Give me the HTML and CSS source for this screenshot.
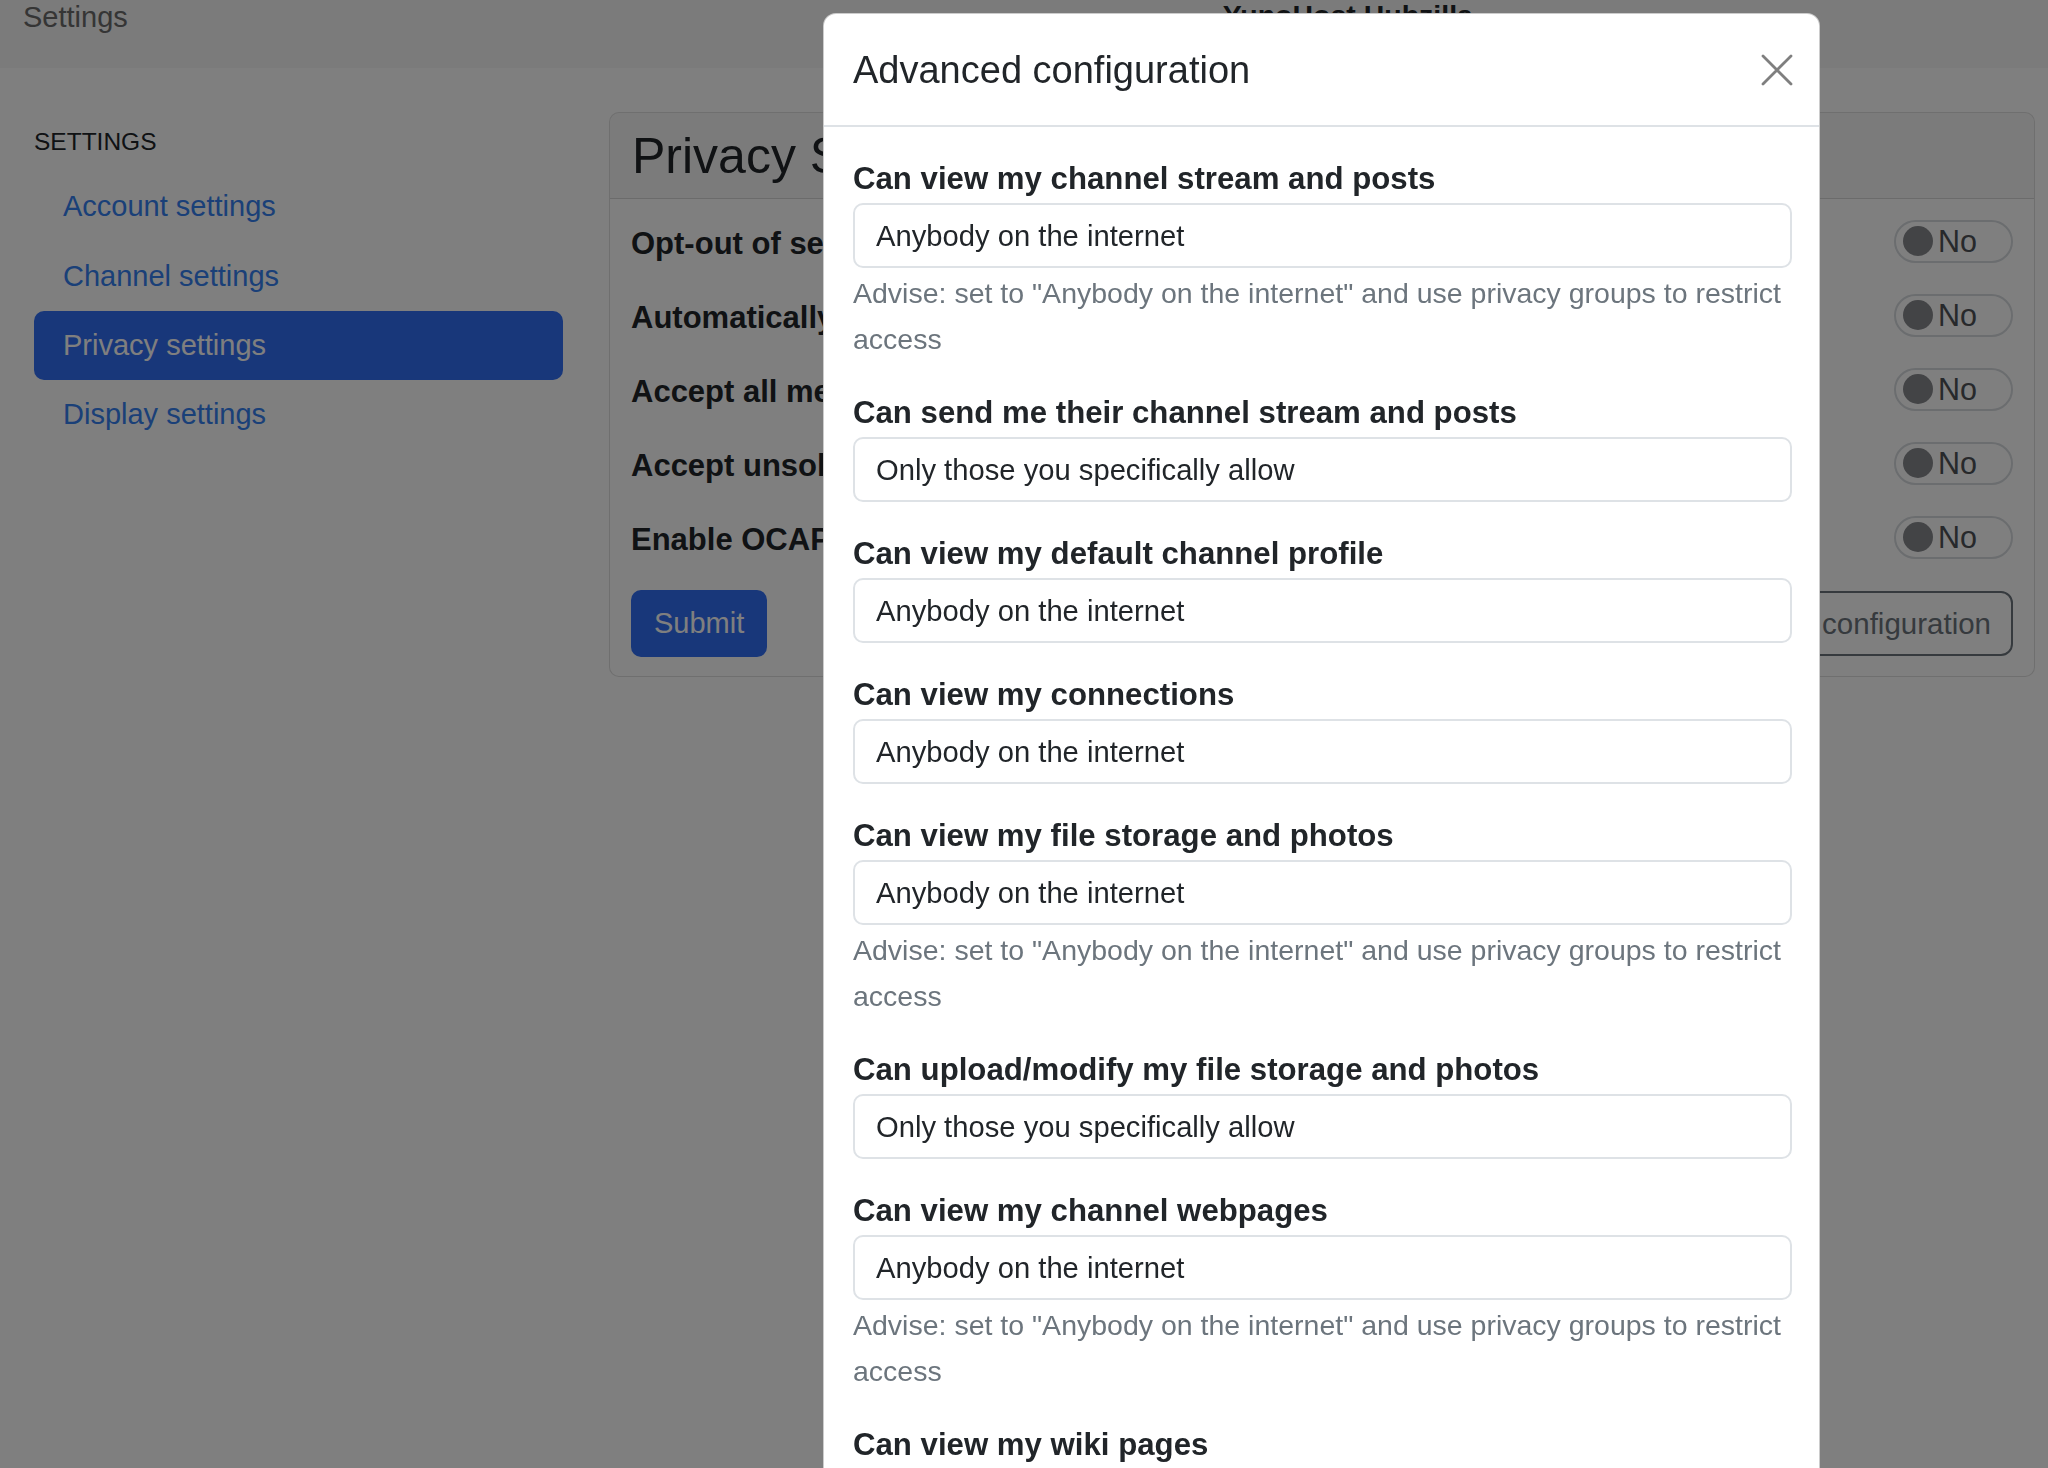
FILE: index.html
```html
<!DOCTYPE html>
<html lang="en">
<head>
<meta charset="utf-8">
<title>Privacy Settings</title>
<link rel="stylesheet" href="styles.css">
</head>
<body>
<div class="page">
  <header class="navbar">
    <span class="nav-left">Settings</span>
    <span class="brand">YunoHost Hubzilla</span>
  </header>
  <div class="main">
    <aside class="sidebar">
      <div class="side-title">Settings</div>
      <ul class="side-nav">
        <li><a class="side-link">Account settings</a></li>
        <li><a class="side-link">Channel settings</a></li>
        <li><a class="side-link active">Privacy settings</a></li>
        <li><a class="side-link">Display settings</a></li>
      </ul>
    </aside>
    <section class="card">
      <div class="card-header"><h2 class="card-title">Privacy Settings</h2></div>
      <div class="card-body">
        <div class="set-row"><span class="row-label">Opt-out of search engine indexing</span><span class="toggle"><span class="knob"></span><span class="toggle-text">No</span></span></div>
        <div class="set-row"><span class="row-label">Automatically approve new contacts</span><span class="toggle"><span class="knob"></span><span class="toggle-text">No</span></span></div>
        <div class="set-row"><span class="row-label">Accept all messages which mention you</span><span class="toggle"><span class="knob"></span><span class="toggle-text">No</span></span></div>
        <div class="set-row"><span class="row-label">Accept unsolicited comments</span><span class="toggle"><span class="knob"></span><span class="toggle-text">No</span></span></div>
        <div class="set-row"><span class="row-label">Enable OCAP access</span><span class="toggle"><span class="knob"></span><span class="toggle-text">No</span></span></div>
        <div class="actions">
          <button class="btn-submit">Submit</button>
          <button class="btn-outline">Advanced configuration</button>
        </div>
      </div>
    </section>
  </div>
</div>
<div class="backdrop"></div>
<div class="modal">
  <div class="modal-header">
    <h5 class="modal-title">Advanced configuration</h5>
    <svg class="close" width="32" height="32" viewBox="0 0 32 32" aria-label="Close">
      <path d="M2 2 L30 30 M30 2 L2 30" stroke="#7f7f7f" stroke-width="2.8" stroke-linecap="round" fill="none"/>
    </svg>
  </div>
  <div class="modal-body">
    <div class="group">
      <label class="g-label">Can view my channel stream and posts</label>
      <div class="select">Anybody on the internet</div>
      <div class="help">Advise: set to "Anybody on the internet" and use privacy groups to restrict access</div>
    </div>
    <div class="group">
      <label class="g-label">Can send me their channel stream and posts</label>
      <div class="select">Only those you specifically allow</div>
    </div>
    <div class="group">
      <label class="g-label">Can view my default channel profile</label>
      <div class="select">Anybody on the internet</div>
    </div>
    <div class="group">
      <label class="g-label">Can view my connections</label>
      <div class="select">Anybody on the internet</div>
    </div>
    <div class="group">
      <label class="g-label">Can view my file storage and photos</label>
      <div class="select">Anybody on the internet</div>
      <div class="help">Advise: set to "Anybody on the internet" and use privacy groups to restrict access</div>
    </div>
    <div class="group">
      <label class="g-label">Can upload/modify my file storage and photos</label>
      <div class="select">Only those you specifically allow</div>
    </div>
    <div class="group">
      <label class="g-label">Can view my channel webpages</label>
      <div class="select">Anybody on the internet</div>
      <div class="help">Advise: set to "Anybody on the internet" and use privacy groups to restrict access</div>
    </div>
    <div class="group">
      <label class="g-label">Can view my wiki pages</label>
      <div class="select">Anybody on the internet</div>
      <div class="help">Advise: set to "Anybody on the internet" and use privacy groups to restrict access</div>
    </div>
    <div class="group">
      <label class="g-label">Can create/edit my channel webpages</label>
      <div class="select">Only those you specifically allow</div>
    </div>
  </div>
</div>
</body>
</html>
```

FILE: styles.css
```css
* { box-sizing: border-box; }

html, body {
  margin: 0;
  padding: 0;
  height: 1468px;
  overflow: hidden;
  background: #ffffff;
  font-family: "Liberation Sans", Arial, sans-serif;
  color: #212529;
}

.page {
  width: 2048px;
}

/* navbar */
.navbar {
  height: 68px;
  background: #f6f6f6;
  display: flex;
  align-items: flex-start;
}

.nav-left {
  margin-left: 23px;
  font-size: 29px;
  line-height: 34.8px;
  color: #6b6b6b;
}

.brand {
  margin-left: 1095px;
  margin-top: -2px;
  font-size: 28.5px;
  line-height: 34.2px;
  font-weight: bold;
  color: #212529;
}

/* main layout */
.main {
  display: flex;
  gap: 46px;
  padding: 44px 13px 0 34px;
}

.sidebar {
  flex: 0 0 529px;
}

.side-title {
  margin-top: 15px;
  font-size: 24.5px;
  line-height: 29.4px;
  text-transform: uppercase;
  color: #212529;
}

.side-nav {
  list-style: none;
  margin: 16px 0 0;
  padding: 0;
}

.side-link {
  display: block;
  height: 69.33px;
  line-height: 69.33px;
  padding-left: 29px;
  font-size: 29px;
  color: #3580f0;
  border-radius: 10px;
}

.side-link.active {
  background: #306ef4;
  color: #ffffff;
}

/* card */
.card {
  flex: 0 0 1426px;
  background: #ffffff;
  border: 1px solid rgba(0, 0, 0, 0.13);
  border-radius: 10px;
  overflow: hidden;
}

.card-header {
  height: 86px;
  background: rgba(0, 0, 0, 0.03);
  border-bottom: 1px solid rgba(0, 0, 0, 0.13);
  padding: 13px 22px 0;
}

.card-title {
  margin: 0;
  font-size: 50px;
  line-height: 60px;
  font-weight: 400;
  color: #212529;
}

.card-body {
  padding: 5px 21px 19px 21px;
}

.set-row {
  height: 74px;
  display: flex;
  align-items: center;
  justify-content: space-between;
}

.row-label {
  padding-top: 5px;
  font-size: 31px;
  line-height: 37px;
  font-weight: bold;
  color: #212529;
}

.toggle {
  width: 119px;
  height: 43px;
  border: 2px solid #d6dade;
  border-radius: 22px;
  display: flex;
  align-items: center;
  padding-left: 7px;
  gap: 5px;
}

.knob {
  width: 30px;
  height: 30px;
  border-radius: 50%;
  background: #86888c;
}

.toggle-text {
  font-size: 30.5px;
  line-height: 1;
  color: #4f5357;
}

.actions {
  margin-top: 16px;
  display: flex;
  align-items: center;
  justify-content: space-between;
}

.btn-submit {
  height: 67px;
  padding: 0 23px;
  border: none;
  border-radius: 10px;
  background: #306ef4;
  color: #ffffff;
  font-family: inherit;
  font-size: 29px;
}

.btn-outline {
  height: 65px;
  padding: 0 20px;
  border: 2px solid #6c757d;
  border-radius: 12px;
  background: transparent;
  color: #6c757d;
  font-family: inherit;
  font-size: 29.5px;
}

/* backdrop + modal */
.backdrop {
  position: fixed;
  inset: 0;
  background: rgba(0, 0, 0, 0.5);
}

.modal {
  position: fixed;
  left: 823px;
  top: 13px;
  width: 997px;
  background: #ffffff;
  border: 1px solid rgba(0, 0, 0, 0.2);
  border-radius: 13px;
}

.modal-header {
  height: 113px;
  border-bottom: 2px solid #dee2e6;
  display: flex;
  align-items: center;
  justify-content: space-between;
  padding: 0 27px 0 29px;
}

.modal-title {
  margin: 3px 0 0;
  font-size: 38px;
  line-height: 45.6px;
  font-weight: 400;
  color: #212529;
}

.close {
  display: block;
  margin-right: -1px;
}

.modal-body {
  padding: 32px 27px 0 29px;
}

.group {
  margin-bottom: 32px;
}

.g-label {
  display: block;
  margin-bottom: 4px;
  font-size: 31.2px;
  line-height: 40px;
  font-weight: bold;
  color: #212529;
}

.select {
  height: 65px;
  border: 2px solid #dee2e6;
  border-radius: 10px;
  padding: 1px 21px 0;
  display: flex;
  align-items: center;
  font-size: 29.2px;
  line-height: 34.8px;
  color: #212529;
}

.help {
  margin-top: 2px;
  margin-bottom: -1px;
  font-size: 28.5px;
  line-height: 46px;
  color: #6c757d;
}
```
